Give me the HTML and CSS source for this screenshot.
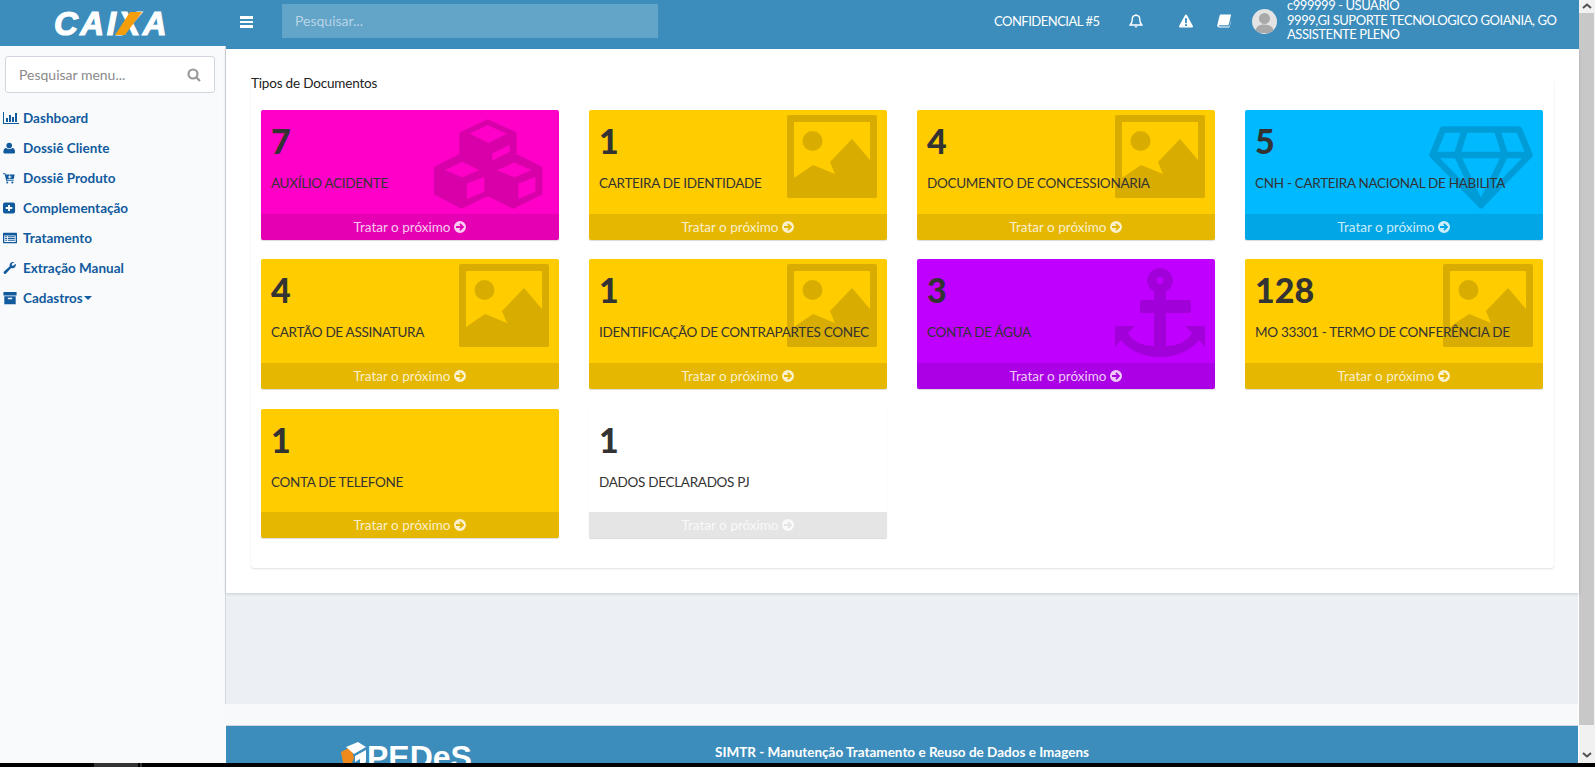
FILE: index.html
```html
<!DOCTYPE html>
<html lang="pt-BR">
<head>
<meta charset="utf-8">
<title>SIMTR</title>
<link rel="stylesheet" href="styles.css">
</head>
<body>
<svg class="defs" width="0" height="0" aria-hidden="true">
  <symbol id="go" viewBox="0 0 24 24"><path fill-rule="evenodd" d="M12 0a12 12 0 1 0 0 24a12 12 0 0 0 0-24zM13 4.500l7.500 7.500l-7.500 7.500l-2.500-2.500l3-3H4v-4h9.500l-3-3z"/></symbol>
  <symbol id="picture" viewBox="0 0 90 83"><path fill-rule="evenodd" d="M2 0H88a2 2 0 0 1 2 2V81a2 2 0 0 1-2 2H2a2 2 0 0 1-2-2V2a2 2 0 0 1 2-2zM7 7V63L26 50L48 59L43 47L65 24L83 45V7z"/><circle cx="25.500" cy="26" r="10"/></symbol>
</svg>
<div class="screen">
  <div class="shell">
    <aside class="rail">
      <div class="brand">
        <span class="logo">CAIXA<svg class="logo-slash" viewBox="0 0 30 23"><path d="M15 0H27L10 23H0z"/></svg></span>
      </div>
      <div class="side">
        <div class="side-search"><span>Pesquisar menu...</span>
          <svg class="side-lens" viewBox="0 0 14 14"><circle cx="6" cy="6" r="4.500"/><path d="M9.500 9.500L13 13"/></svg>
        </div>
        <nav class="menu">
          <a class="menu-item"><svg class="mi" preserveAspectRatio="xMinYMid meet" viewBox="0 0 16 14"><path d="M0 1h1v11h15v1H0zM3 7h2v4H3zM6 4h2v7H6zM9 6h2v5H9zM12 2h2v9h-2z"/></svg>Dashboard</a>
          <a class="menu-item"><svg class="mi" preserveAspectRatio="xMinYMid meet" viewBox="0 -2 18.600 18"><circle cx="8" cy="3.800" r="3.600"/><path d="M2 14c-1 0-1.500-.6-1.500-1.500C.5 9.500 1.500 7 4 7c1 1 2.500 1.500 4 1.500S11 8 12 7c2.500 0 3.500 2.500 3.500 5.500c0 .9-.5 1.500-1.500 1.500z"/></svg>Dossiê Cliente</a>
          <a class="menu-item"><svg class="mi" preserveAspectRatio="xMinYMid meet" viewBox="0 -2 18.600 18"><path fill-rule="evenodd" d="M0 1h3l.4 1.500H15l-1.300 6H5l.3 1.300h8.500V11H4.200L2.200 2.300H0zM8 3.500v1.500H6.500v1.300H8v1.500h1.300V6.300h1.500V5H9.300V3.500z"/><circle cx="5.500" cy="12.700" r="1.300"/><circle cx="12" cy="12.700" r="1.300"/></svg>Dossiê Produto</a>
          <a class="menu-item"><svg class="mi" preserveAspectRatio="xMinYMid meet" viewBox="0 -2 18.600 18"><path fill-rule="evenodd" d="M2.500 0h10.500a2.500 2.500 0 0 1 2.500 2.500v9a2.500 2.500 0 0 1-2.500 2.500H2.500A2.500 2.500 0 0 1 0 11.500v-9A2.500 2.500 0 0 1 2.500 0zM6.500 3v2.800H3.500v2.400h3V11H9V8.200h3V5.800H9V3z"/></svg>Complementação</a>
          <a class="menu-item"><svg class="mi" preserveAspectRatio="xMinYMid meet" viewBox="0 -1 17 16"><path fill-rule="evenodd" d="M1 1h14a1 1 0 0 1 1 1v10a1 1 0 0 1-1 1H1a1 1 0 0 1-1-1V2a1 1 0 0 1 1-1zM1.500 4v7.500h13V4zM2.500 5h2v1h-2zM5.500 5h8v1h-8zM2.500 7h2v1h-2zM5.500 7h8v1h-8zM2.500 9h2v1h-2zM5.500 9h8v1h-8z"/></svg>Tratamento</a>
          <a class="menu-item"><svg class="mi" preserveAspectRatio="xMinYMid meet" viewBox="0 -1 18.600 16"><path d="M11.500 0c-2.300 0-3.800 1.700-3.800 3.800c0 .5.100.9.200 1.300L1.200 11a1.700 1.700 0 0 0 2.300 2.500l6-6.500c.5.200 1 .3 1.500.3c2.300 0 4-1.800 4-4c0-.5 0-.7-.2-1.200L12 4.500L10.200 4V2.200L13 .2c-.5-.2-1-.2-1.500-.2z"/></svg>Extração Manual</a>
          <a class="menu-item"><svg class="mi" preserveAspectRatio="xMinYMid meet" viewBox="0 -1 17 16"><path fill-rule="evenodd" d="M.5 0h15v4H.5zM1.500 5h13v9h-13zM5.500 6.800v1.500h5V6.800z"/></svg>Cadastros<span class="caret"></span></a>
        </nav>
      </div>
    </aside>

    <main class="main">
      <header class="topbar">
        <span class="burger"><i></i><i></i><i></i></span>
        <div class="top-search">Pesquisar...</div>
        <div class="top-right">
          <span class="top-label">CONFIDENCIAL #5</span>
          <span class="top-slot bell-slot"><svg class="top-icon" viewBox="0 0 14 15"><path class="hollow" d="M7 1.500c2.500 0 4 1.800 4 4c0 3.500 1 5 2.200 6.300H.8C2 10.500 3 9 3 5.500c0-2.200 1.500-4 4-4z"/><path d="M5.500 13h3a1.500 1.500 0 0 1-3 0zM6.300.2h1.400v1.600H6.300z"/></svg></span>
          <span class="top-slot warn-slot"><svg class="top-icon" viewBox="0 0 14 13"><path fill-rule="evenodd" d="M7 0c.4 0 .7.200.9.600l6 11c.3.700-.1 1.400-.9 1.400H1c-.8 0-1.200-.7-.9-1.400l6-11C6.300.2 6.600 0 7 0zM5.900 3.800l.3 4.900h1.600l.3-4.900zM6 9.800v1.800h2V9.800z"/></svg></span>
          <span class="top-slot book-slot"><svg class="top-icon" viewBox="0 0 14 13"><path d="M4 0h9.500c.5 0 .6.400.5.800l-2.300 9.300c-.1.400-.4.700-.9.700H2.500c-.8 0-1 .5-.8.800c.2.300.6.400 1 .4h8.800c.5 0 .9-.2 1.100-.8l2-7.500l.4.300L12.700 12c-.2.700-.7 1-1.400 1H2.500C1 13 0 12 .3 10.500L2.500 1.500C2.700.6 3.200 0 4 0z"/></svg></span>
          <span class="avatar"><svg viewBox="0 0 25 25"><circle cx="12.500" cy="9.500" r="5.500"/><path d="M3 24c0-6 4-8.500 9.500-8.500S22 18 22 24z"/></svg></span>
          <div class="user">c999999 - USUARIO<br>9999,GI SUPORTE TECNOLOGICO GOIANIA, GO<br>ASSISTENTE PLENO</div>
        </div>
      </header>

      <section class="content">
        <div class="box">
          <h1 class="box-title">Tipos de Documentos</h1>
          <div class="cards">

            <article class="card magenta">
              <div class="card-body"><h3 class="num">7</h3><p class="lab">AUXÍLIO ACIDENTE</p></div>
              <svg class="mark mark-cubes" viewBox="0 0 390 315"><path fill-rule="evenodd" stroke="#000" stroke-width="8" stroke-linejoin="round" d="M188 29L271 67V132L348 170V248L265 289L188 251L110 289L31 248V170L107 132V67zM125 68L190 100L255 68L188 38zM198 125V155L258 125V95zM50 178L112 203L172 178L112 148zM122 215V270L182 245V192zM205 178L268 203L330 178L268 150zM276 215V270L335 245V192z"/></svg>
              <a class="card-foot">Tratar o próximo <svg class="go"><use href="#go"/></svg></a>
            </article>

            <article class="card yellow">
              <div class="card-body"><h3 class="num">1</h3><p class="lab">CARTEIRA DE IDENTIDADE</p></div>
              <svg class="mark mark-pic"><use href="#picture"/></svg>
              <a class="card-foot">Tratar o próximo <svg class="go"><use href="#go"/></svg></a>
            </article>

            <article class="card yellow">
              <div class="card-body"><h3 class="num">4</h3><p class="lab">DOCUMENTO DE CONCESSIONARIA</p></div>
              <svg class="mark mark-pic"><use href="#picture"/></svg>
              <a class="card-foot">Tratar o próximo <svg class="go"><use href="#go"/></svg></a>
            </article>

            <article class="card cyan">
              <div class="card-body"><h3 class="num">5</h3><p class="lab">CNH - CARTEIRA NACIONAL DE HABILITA</p></div>
              <svg class="mark mark-gem" viewBox="0 0 104 84"><path fill="none" stroke="#000" stroke-width="6.500" stroke-linejoin="round" d="M14 3.500H90L100.500 29L52 79L3.500 29zM3.500 29H100.500M36 3.500L28 29L52 79L76 29L68 3.500"/></svg>
              <a class="card-foot">Tratar o próximo <svg class="go"><use href="#go"/></svg></a>
            </article>

            <article class="card yellow">
              <div class="card-body"><h3 class="num">4</h3><p class="lab">CARTÃO DE ASSINATURA</p></div>
              <svg class="mark mark-pic"><use href="#picture"/></svg>
              <a class="card-foot">Tratar o próximo <svg class="go"><use href="#go"/></svg></a>
            </article>

            <article class="card yellow">
              <div class="card-body"><h3 class="num">1</h3><p class="lab">IDENTIFICAÇÃO DE CONTRAPARTES CONEC</p></div>
              <svg class="mark mark-pic"><use href="#picture"/></svg>
              <a class="card-foot">Tratar o próximo <svg class="go"><use href="#go"/></svg></a>
            </article>

            <article class="card purple">
              <div class="card-body"><h3 class="num">3</h3><p class="lab">CONTA DE ÁGUA</p></div>
              <svg class="mark mark-anchor" viewBox="0 0 90 89"><path fill-rule="evenodd" d="M45 0a12.600 12.600 0 0 1 6 23.700V32h22.500a2.500 2.500 0 0 1 2.500 2.500v8a2.500 2.500 0 0 1-2.500 2.500H51V78C62 78 72 74 77 65L70 58H90V79L84 72C74 84 60 89 45 89C30 89 16 84 6 72L0 79V58H20L13 65C18 74 28 78 39 78V45H27.500a2.500 2.500 0 0 1-2.500-2.500v-8A2.500 2.500 0 0 1 27.500 32H39V23.700A12.600 12.600 0 0 1 45 0zM45 9a3.500 3.500 0 1 0 0 7a3.500 3.500 0 0 0 0-7z"/></svg>
              <a class="card-foot">Tratar o próximo <svg class="go"><use href="#go"/></svg></a>
            </article>

            <article class="card yellow">
              <div class="card-body"><h3 class="num">128</h3><p class="lab">MO 33301 - TERMO DE CONFERÊNCIA DE</p></div>
              <svg class="mark mark-pic"><use href="#picture"/></svg>
              <a class="card-foot">Tratar o próximo <svg class="go"><use href="#go"/></svg></a>
            </article>

            <article class="card yellow">
              <div class="card-body"><h3 class="num">1</h3><p class="lab">CONTA DE TELEFONE</p></div>
              <a class="card-foot">Tratar o próximo <svg class="go"><use href="#go"/></svg></a>
            </article>

            <article class="card blank">
              <div class="card-body"><h3 class="num">1</h3><p class="lab">DADOS DECLARADOS PJ</p></div>
              <a class="card-foot">Tratar o próximo <svg class="go"><use href="#go"/></svg></a>
            </article>

          </div>
        </div>
      </section>

      <div class="gray-area"></div>
      <div class="light-area"></div>

      <footer class="foot">
        <div class="foot-logo">
          <svg class="foot-cube" viewBox="0 0 26 30"><path class="cube-o" d="M0 10L10 5L13 16L7 30L3 25z"/><path class="cube-w" d="M5 5L17 0L25 5L13 12zM14 14L25 8V20L19 24V17L14 20z"/></svg><span>PEDeS</span>
        </div>
        <div class="foot-text">SIMTR - Manutenção Tratamento e Reuso de Dados e Imagens</div>
        <div></div>
      </footer>
    </main>

    <div class="scroll">
      <div class="scroll-btn"><svg viewBox="0 0 10 6"><path d="M1 5L5 1.500L9 5"/></svg></div>
      <div class="scroll-thumb"></div>
      <div class="scroll-rest"><svg viewBox="0 0 10 6"><path d="M1 1L5 4.500L9 1"/></svg></div>
    </div>
  </div>
  <div class="strip"><span class="strip-chip"></span><span class="strip-tick"></span></div>
</div>
</body>
</html>
```

FILE: styles.css
```css
* { box-sizing: border-box; }
html, body { margin: 0; height: 100%; }
body {
  background: #000;
  overflow: hidden;
  font-family: Lato, "Noto Sans", sans-serif;
  font-size: 14px;
  color: #333;
}
.defs { position: absolute; }
.screen { height: 767px; display: flex; flex-direction: column; }
.shell {
  height: 763px;
  display: grid;
  grid-template-columns: 226px 1353px 16px;
  overflow: hidden;
}

/* left rail */
.rail { display: flex; flex-direction: column; background: #f9fafc; }
.brand { height: 46px; background: #3c8dbc; flex: none; padding: 8px 0 0 54px; }
.logo {
  position: relative;
  display: inline-block;
  font-family: "Liberation Sans", sans-serif;
  font-weight: 700;
  font-style: italic;
  font-size: 33px;
  line-height: 32px;
  letter-spacing: 2.500px;
  color: #fff;
  -webkit-text-stroke: 1.200px #fff;
}
.logo-slash { position: absolute; left: 61px; top: 4px; width: 30px; height: 23px; fill: #f59e0b; }
.side { height: 658px; border-right: 1px solid #d2d6de; padding: 10px 10px 0 5px; }
.side-search {
  height: 37px;
  background: #fff;
  border: 1px solid #d2d6de;
  border-radius: 3px;
  display: flex;
  align-items: center;
  justify-content: space-between;
  padding: 0 13px 0 13px;
  color: #8a8a8a;
}
.side-lens { width: 14px; height: 14px; fill: none; stroke: #999; stroke-width: 2.200; }
.menu { margin: 10px 0 0 -2px; display: flex; flex-direction: column; }
.menu-item {
  height: 30px;
  display: flex;
  align-items: center;
  gap: 4px;
  color: #115a9e;
  font-weight: 700;
  font-size: 13.500px;
}
.mi { width: 16px; height: 14px; fill: #115a9e; flex: none; }
.caret {
  width: 0; height: 0;
  margin-left: -3px;
  border: 4.500px solid transparent;
  border-top-color: #115a9e;
  border-bottom-width: 0;
}

/* main column */
.main { background: #fff; display: flex; flex-direction: column; min-width: 0; }
.topbar { height: 49px; flex: none; background: #3c8dbc; display: flex; color: #fff; overflow: hidden; }
.burger { width: 13px; margin: 16px 0 0 14px; display: flex; flex-direction: column; gap: 2px; flex: none; }
.burger i { height: 2.500px; background: #fff; display: block; }
.top-search {
  width: 376px;
  height: 34px;
  margin: 4px 0 0 29px;
  padding-left: 13px;
  background: #63a4c9;
  color: #b8d4e6;
  line-height: 34px;
}
.top-right { margin-left: auto; display: flex; width: 585px; flex: none; }
.top-label { width: 135px; line-height: 42px; font-size: 13px; letter-spacing: -.5px; white-space: nowrap; }
.top-slot { display: block; padding-top: 14px; }
.bell-slot { width: 50px; }
.warn-slot { width: 38px; }
.book-slot { width: 35px; }
.top-icon { width: 14px; height: 14px; fill: #fff; display: block; }
.top-icon .hollow { fill: none; stroke: #fff; stroke-width: 1.500; }
.avatar { width: 25px; height: 25px; margin: 9px 9px 0 0; border-radius: 50%; background: #e3e3e3; overflow: hidden; flex: none; }
.avatar svg { width: 25px; height: 25px; fill: #a9a9a9; display: block; }
.user { width: 293px; margin-top: -2px; padding-left: 1px; font-size: 13px; letter-spacing: -.45px; line-height: 14.500px; white-space: nowrap; }

/* document panel */
.content { height: 544px; flex: none; padding: 28px 25px 0; box-shadow: 0 1px 3px rgba(0,0,0,.15); position: relative; }
.box {
  height: 491px;
  background: #fff;
  border-radius: 3px;
  box-shadow: 0 1px 2px rgba(0,0,0,.12);
  padding: 0 10px;
}
.box-title { margin: 0 0 20px -10px; font-size: 13.500px; letter-spacing: -.18px; line-height: 13px; font-weight: 400; color: #222; }
.cards {
  display: grid;
  grid-template-columns: repeat(4, 298px);
  grid-auto-rows: 129.500px;
  column-gap: 30px;
  row-gap: 19.800px;
}
.card {
  position: relative;
  display: flex;
  flex-direction: column;
  border-radius: 2px;
  overflow: hidden;
  box-shadow: 0 1px 1px rgba(0,0,0,.15);
}
.magenta { background: #ff00c8; }
.yellow { background: #ffcc00; }
.cyan { background: #00b9ff; }
.purple { background: #bf00ff; }
.blank { background: #fff; }
.card-body { flex: 1; padding: 13px 10px 0; position: relative; z-index: 1; }
.num { margin: 0; font-size: 34px; line-height: 36px; font-weight: 900; color: #333; }
.lab { margin: 14px 0 0; font-size: 13.500px; letter-spacing: -.3px; line-height: 20px; white-space: nowrap; color: #333; }
.card-foot {
  height: 26px;
  flex: none;
  background: rgba(0,0,0,.1);
  color: rgba(255,255,255,.8);
  display: flex;
  align-items: center;
  justify-content: center;
  gap: 4px;
  font-size: 13.500px;
}
.go { width: 12px; height: 12px; fill: rgba(255,255,255,.8); }
.mark { position: absolute; opacity: .15; }
.mark-pic { width: 90px; height: 83px; top: 5px; right: 10px; }
.mark-cubes { width: 130px; height: 105px; top: 1px; right: 4px; }
.mark-gem { width: 104px; height: 84px; top: 16px; right: 10px; }
.mark-anchor { width: 90px; height: 89px; top: 9px; right: 10px; }

/* lower areas */
.gray-area { height: 111px; flex: none; margin-right: 1px; background: #ecf0f5; }
.light-area { height: 21px; flex: none; margin-right: 1px; background: #f8f9fb; }
.foot {
  height: 38px;
  flex: none;
  margin-right: 1px;
  background: #3c8dbc;
  border-top: 1px solid #d2d6de;
  display: grid;
  grid-template-columns: 1fr auto 1fr;
  overflow: hidden;
  color: #fff;
}
.foot-logo {
  padding: 13px 0 0 115px;
  display: flex;
  align-items: flex-start;
  font-family: "Liberation Sans", sans-serif;
  font-weight: 700;
  font-size: 32px;
  line-height: 32px;
  white-space: nowrap;
}
.foot-cube { width: 26px; height: 30px; flex: none; margin-top: 3px; }
.foot-logo span { margin-top: 2px; }
.cube-o { fill: #f18a1c; }
.cube-w { fill: #fff; }
.foot-text { padding-top: 16px; font-weight: 700; font-size: 13.500px; line-height: 20px; white-space: nowrap; }

/* scrollbar */
.scroll { background: #f1f1f1; display: flex; flex-direction: column; }
.scroll-btn { height: 13px; flex: none; padding: 3px 3px 0; }
.scroll-thumb { height: 712px; flex: none; background: #c8c8c8; margin-right: 1px; }
.scroll-rest { flex: 1; padding: 27px 3px 0; }
.scroll svg { display: block; width: 10px; height: 6px; fill: none; stroke: #505050; stroke-width: 2; }

/* bottom strip */
.strip { flex: 1; display: flex; background: #000; }
.strip-chip { width: 44px; margin-left: 94px; background: #333; }
.strip-tick { width: 2px; margin-left: 2px; background: #333; }
```
